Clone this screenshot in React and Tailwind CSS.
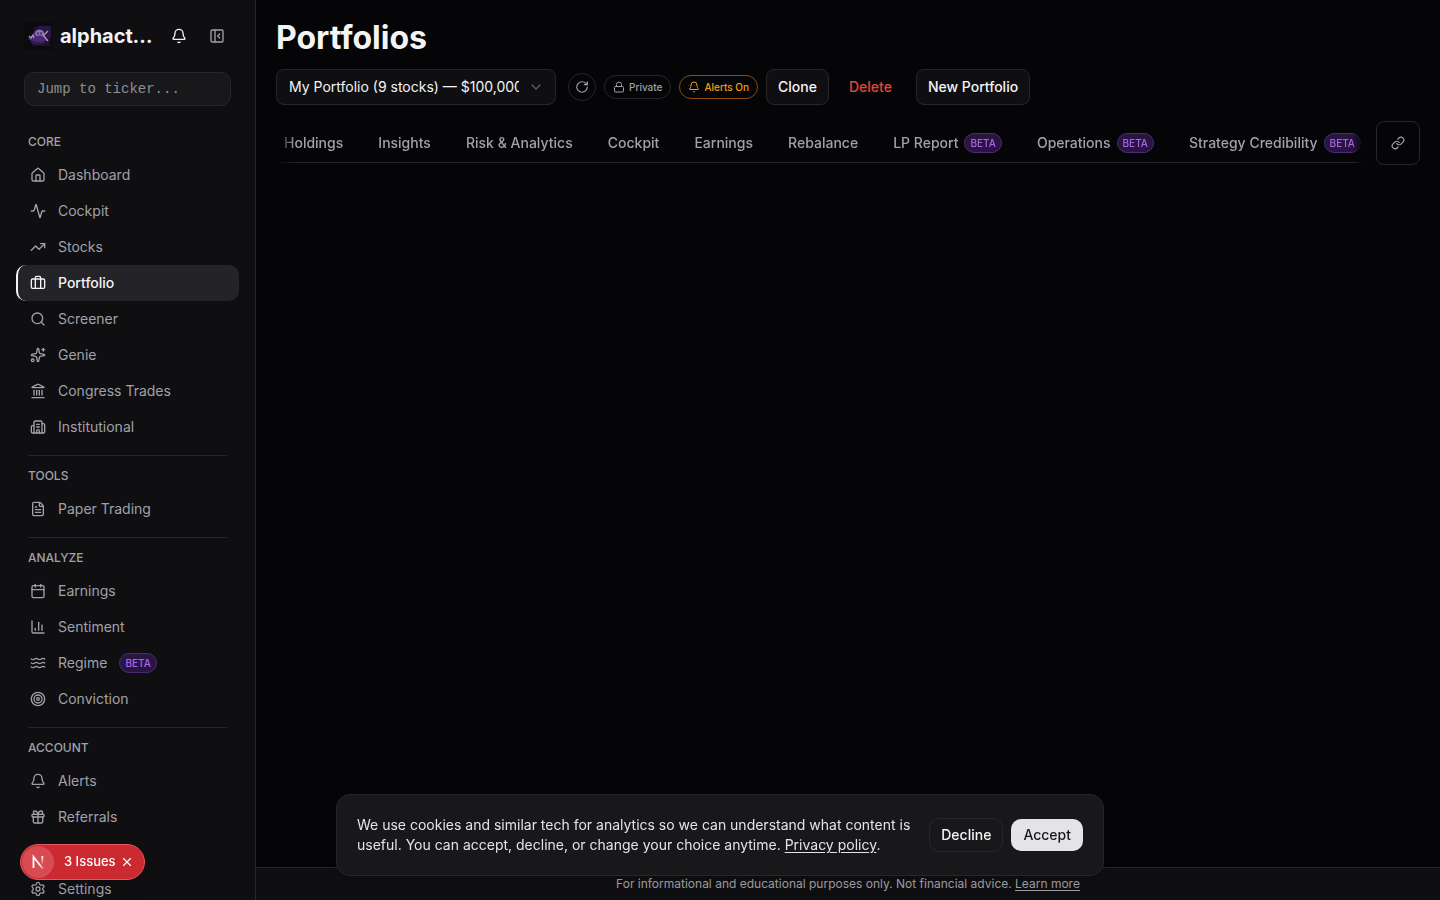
import {
  Activity,
  Bell,
  Briefcase,
  Building2,
  Calendar,
  ChartColumn,
  ChevronDown,
  FileText,
  Gift,
  House,
  Landmark,
  Link,
  Lock,
  PanelLeftClose,
  RotateCw,
  Search,
  Settings,
  Sparkles,
  Target,
  TrendingUp,
  Waves,
  X,
} from "lucide-react";

const NAV_SECTIONS = [
  {
    title: "CORE",
    items: [
      { label: "Dashboard", icon: House },
      { label: "Cockpit", icon: Activity },
      { label: "Stocks", icon: TrendingUp },
      { label: "Portfolio", icon: Briefcase, active: true },
      { label: "Screener", icon: Search },
      { label: "Genie", icon: Sparkles },
      { label: "Congress Trades", icon: Landmark },
      { label: "Institutional", icon: Building2 },
    ],
  },
  {
    title: "TOOLS",
    items: [{ label: "Paper Trading", icon: FileText }],
  },
  {
    title: "ANALYZE",
    items: [
      { label: "Earnings", icon: Calendar },
      { label: "Sentiment", icon: ChartColumn },
      { label: "Regime", icon: Waves, beta: true },
      { label: "Conviction", icon: Target },
    ],
  },
  {
    title: "ACCOUNT",
    items: [
      { label: "Alerts", icon: Bell },
      { label: "Referrals", icon: Gift },
      { label: "Settings", icon: Settings, spaced: true },
    ],
  },
];

const TABS = [
  { label: "Holdings" },
  { label: "Insights" },
  { label: "Risk & Analytics" },
  { label: "Cockpit" },
  { label: "Earnings" },
  { label: "Rebalance" },
  { label: "LP Report", beta: true },
  { label: "Operations", beta: true },
  { label: "Strategy Credibility", beta: true },
];

function BetaBadge() {
  return (
    <span className="rounded-full border border-[#4c2a78] bg-[#2a1540] px-[5px] py-px text-[10px] leading-4 font-medium text-[#a966e8]">
      BETA
    </span>
  );
}

function Logo() {
  return (
    <svg viewBox="0 0 28 28" className="size-7 shrink-0" aria-hidden="true">
      <rect width="28" height="28" rx="2" fill="#0b0a0d" />
      <path d="M10 5h16v19H8z" fill="#1e1130" />
      <path d="M14 4h13v12l-8 4z" fill="#2a1545" />
      <path d="M4 17c2-3 4-3 6-7 2-3 8-4 10 0 1 2 1 5 4 8-5 3-14 3-20-1z" fill="#4a2878" />
      <path d="M11 12c0-3 3-5 5-4 3 0 4 2 4 4-1 2-3 3-4 1-2 2-4 1-5-1z" fill="#8d76ab" />
      <path d="M14 10v3M17 10v3" stroke="#2a1545" strokeWidth="1" />
      <path
        d="M5 14l2 2 2-3 1 3M19 14l5-5M19 13l5 6"
        fill="none"
        stroke="#a99bb8"
        strokeWidth="1.2"
      />
      <path d="M7 20c4 2 9 2 14 0" fill="none" stroke="#3a1c63" strokeWidth="1.5" />
    </svg>
  );
}

function NavItem({ label, icon: Icon, active, beta, spaced }) {
  return (
    <li className={spaced ? "mt-9" : ""}>
      <a
        href="#"
        aria-current={active ? "page" : undefined}
        className={`flex min-h-9 items-center gap-3 rounded-[10px] border-l-2 px-3 text-sm ${
          active
            ? "border-[#f4f4f5] bg-[#232328] font-medium text-[#f4f4f5]"
            : "border-transparent text-[#a1a1aa]"
        }`}
      >
        <Icon size={16} className="shrink-0" />
        {label}
        {beta && <BetaBadge />}
      </a>
    </li>
  );
}

function Sidebar() {
  return (
    <aside className="flex w-64 shrink-0 flex-col overflow-hidden border-r border-[#27272a] bg-[#0f0f11]">
      <div className="flex h-[72px] shrink-0 items-center pr-[30px] pl-6">
        <Logo />
        <span className="ml-2 w-24 truncate text-xl font-bold">alphactor.ai</span>
        <button aria-label="Notifications" className="ml-auto">
          <Bell size={16} />
        </button>
        <button aria-label="Collapse sidebar" className="ml-[22px] text-[#a1a1aa]">
          <PanelLeftClose size={16} />
        </button>
      </div>

      <div className="shrink-0 px-6">
        <input
          type="text"
          aria-label="Jump to ticker"
          placeholder="Jump to ticker..."
          className="h-[34px] w-full rounded-[10px] border border-[#27272a] bg-[#18181b] px-3 font-['Liberation_Mono',monospace] text-sm placeholder:text-[#8e8e97]"
        />
      </div>

      <nav className="px-4 pt-7">
        {NAV_SECTIONS.map((section, i) => (
          <section key={section.title}>
            {i > 0 && <hr className="mx-3 mt-2.5 mb-3 border-[#27272a]" />}
            <h2 className="mb-[7px] px-3 text-xs leading-4 font-medium text-[#a1a1aa]">
              {section.title}
            </h2>
            <ul>
              {section.items.map((item) => (
                <NavItem key={item.label} {...item} />
              ))}
            </ul>
          </section>
        ))}
      </nav>
    </aside>
  );
}

function Toolbar() {
  return (
    <div className="mt-[13px] flex flex-wrap items-center gap-2">
      <div className="relative mr-1">
        <select
          aria-label="Portfolio"
          className="h-9 w-[280px] appearance-none rounded-lg border border-[#27272a] bg-[#0f0f11] pr-9 pl-3 text-sm"
        >
          <option>My Portfolio (9 stocks) — $100,000.00</option>
        </select>
        <ChevronDown
          size={16}
          className="pointer-events-none absolute top-2.5 right-3 text-[#5c5c64]"
        />
      </div>
      <button
        aria-label="Refresh"
        className="flex size-7 items-center justify-center rounded-full border border-[#27272a] text-[#a1a1aa]"
      >
        <RotateCw size={14} />
      </button>
      <button className="flex h-6 items-center gap-1 rounded-full border border-[#27272a] px-2 text-[10px] font-medium text-[#a1a1aa]">
        <Lock size={12} />
        Private
      </button>
      <button className="flex h-6 items-center gap-1 rounded-full border border-[#8f4a0c] px-2 text-[10px] font-medium text-[#f59e0b]">
        <Bell size={12} />
        Alerts On
      </button>
      <button className="h-9 rounded-lg border border-[#27272a] bg-[#0f0f11] px-[11px] text-sm font-medium">
        Clone
      </button>
      <button className="h-9 px-3 text-sm font-medium text-[#e5463c]">Delete</button>
      <button className="ml-1 h-9 rounded-lg border border-[#27272a] bg-[#0f0f11] px-[11px] text-sm font-medium">
        New Portfolio
      </button>
    </div>
  );
}

function PortfolioTabs() {
  return (
    <div className="mt-4 flex items-center gap-3">
      <div className="min-w-0 flex-1 overflow-hidden [mask-image:linear-gradient(to_right,transparent,black_20px,black_calc(100%-12px),transparent)]">
        <div
          role="tablist"
          className="flex h-10 items-center justify-between border-b border-[#27272a] pr-[3px] pl-2"
        >
          {TABS.map((tab) => (
            <button
              key={tab.label}
              role="tab"
              className="flex items-center gap-1.5 text-sm font-medium whitespace-nowrap text-[#a1a1aa]"
            >
              {tab.label}
              {tab.beta && <BetaBadge />}
            </button>
          ))}
        </div>
      </div>
      <button
        aria-label="Copy link"
        className="flex size-11 items-center justify-center rounded-lg border border-[#27272a] text-[#a1a1aa]"
      >
        <Link size={14} />
      </button>
    </div>
  );
}

function CookieBanner() {
  return (
    <div className="fixed inset-x-4 bottom-6 mx-auto flex max-w-3xl items-center gap-4 rounded-[14px] border border-[#27272a] bg-[#18181b] p-5 shadow-lg">
      <p className="flex-1 text-sm leading-5 text-[#e4e4e7]">
        We use cookies and similar tech for analytics so we can understand what content is
        useful. You can accept, decline, or change your choice anytime.{" "}
        <a href="#" className="underline underline-offset-2">
          Privacy policy
        </a>
        .
      </p>
      <div className="flex items-center gap-2">
        <button className="h-[34px] rounded-[10px] border border-[#27272a] px-[11px] text-sm font-medium">
          Decline
        </button>
        <button className="h-8 rounded-[10px] bg-[#e4e4e7] px-3 text-sm font-medium text-[#18181b]">
          Accept
        </button>
      </div>
    </div>
  );
}

function IssuesPill() {
  return (
    <div className="fixed bottom-5 left-5 flex h-9 w-[125px] items-center rounded-full border border-[#e5575b] bg-[#ca2a30] pl-px text-[13px] font-medium text-white shadow-lg">
      <span className="flex size-8 items-center justify-center rounded-full bg-[#d94b52]">
        <svg viewBox="0 0 16 16" className="size-4" fill="none" aria-hidden="true">
          <defs>
            <linearGradient id="n-diagonal" x1="4" y1="2" x2="14" y2="15" gradientUnits="userSpaceOnUse">
              <stop offset="0.6" stopColor="#fff" />
              <stop offset="1" stopColor="#fff" stopOpacity="0.2" />
            </linearGradient>
            <linearGradient id="n-stem" x1="12" y1="2" x2="12" y2="11" gradientUnits="userSpaceOnUse">
              <stop stopColor="#fff" />
              <stop offset="1" stopColor="#fff" stopOpacity="0" />
            </linearGradient>
          </defs>
          <path d="M3.5 14V2.8L13 15" stroke="url(#n-diagonal)" strokeWidth="1.8" />
          <path d="M12.3 2v9" stroke="url(#n-stem)" strokeWidth="1.8" />
        </svg>
      </span>
      <button className="ml-2.5 whitespace-nowrap">3 Issues</button>
      <button aria-label="Dismiss issues" className="ml-1">
        <X size={14} />
      </button>
    </div>
  );
}

function App() {
  return (
    <div className="flex h-screen overflow-hidden bg-[#050507] font-['Inter',sans-serif] text-[#f4f4f5]">
      <Sidebar />

      <div className="flex min-w-0 flex-1 flex-col">
        <main className="flex-1 px-5 pt-5">
          <h1 className="text-[32px] leading-9 font-bold">Portfolios</h1>
          <Toolbar />
          <PortfolioTabs />
        </main>

        <footer className="border-t border-[#27272a] bg-[#0f0f11] py-2 text-center text-xs leading-4 text-[#a1a1aa]">
          For informational and educational purposes only. Not financial advice.{" "}
          <a href="#" className="underline underline-offset-2">
            Learn more
          </a>
        </footer>
      </div>

      <CookieBanner />
      <IssuesPill />
    </div>
  );
}

export default App;
